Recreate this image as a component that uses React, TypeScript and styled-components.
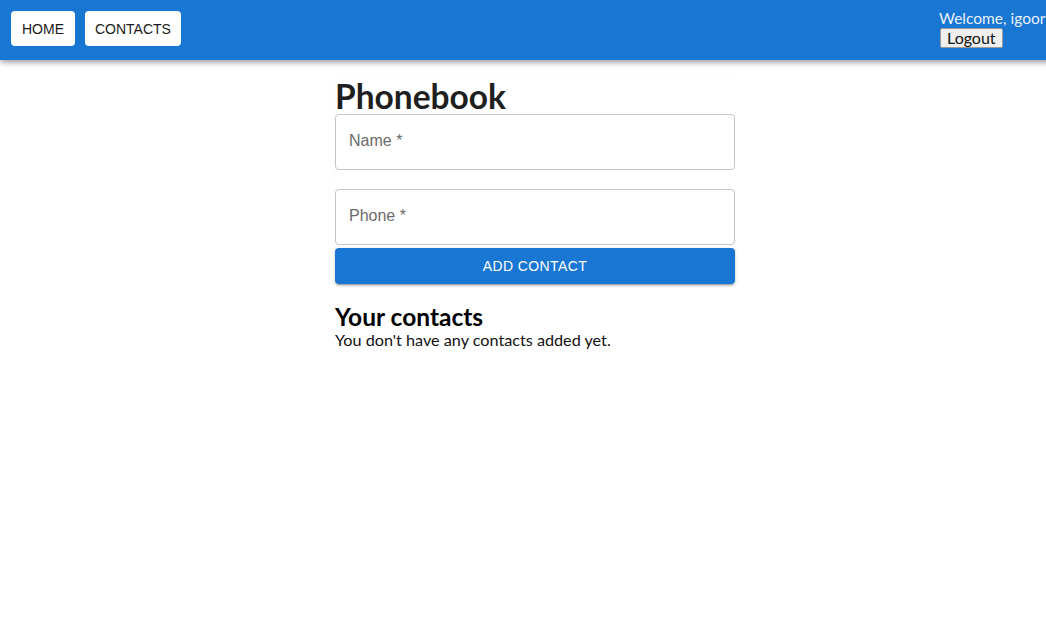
import React from "react";
import styled, { createGlobalStyle } from "styled-components";

const Global = createGlobalStyle`
  html, body { margin: 0; padding: 0; background: #fff; }
  body { font-family: "Lato", "Open Sans", sans-serif; color: #000; overflow: hidden; }
  * { box-sizing: border-box; }
`;

const Page = styled.div`
  width: 1070px;
`;

const Header = styled.header`
  height: 60px;
  background: #1976d2;
  display: flex;
  align-items: flex-start;
  box-shadow: 0 2px 4px -1px rgba(0,0,0,0.2), 0 4px 5px 0 rgba(0,0,0,0.14), 0 1px 10px 0 rgba(0,0,0,0.12);
`;

const Nav = styled.nav`
  display: flex;
  gap: 10px;
  padding: 11px 0 0 11px;
`;

const NavButton = styled.a<{ $px?: number }>`
  display: flex;
  align-items: center;
  height: 35px;
  padding: 0 ${(p) => p.$px ?? 11}px;
  background: #fff;
  border-radius: 4px;
  font-family: "Liberation Sans", Arial, sans-serif;
  font-size: 14px;
  color: #1a1a1a;
  text-decoration: none;
`;

const UserMenu = styled.div`
  margin-left: auto;
  width: 131px;
  padding-top: 8px;
  white-space: nowrap;
  display: flex;
  flex-direction: column;
  align-items: flex-start;
`;

const Welcome = styled.span`
  font-size: 15.5px;
  line-height: 20px;
  color: #e8f1fb;
`;

const LogoutButton = styled.button`
  margin-left: 1px;
  height: 20px;
  padding: 0 6px;
  font-family: "Lato", "Open Sans", sans-serif;
  font-size: 16px;
  line-height: 16px;
  color: #111;
  background: #efefef;
  border: 1px solid #9a9a9a;
  border-radius: 2px;
`;

const Main = styled.main`
  width: 400px;
  margin: 0 auto;
  padding-top: 18px;
`;

const Form = styled.form`
  display: flex;
  flex-direction: column;
  box-shadow: 0 0 3px rgba(0,0,0,0.04);
`;

const Title = styled.h1`
  margin: 0;
  font-weight: 700;
  font-size: 33.5px;
  line-height: 36px;
  color: #1f1f1f;
`;

const Field = styled.div<{ $mb: number }>`
  height: 56px;
  border: 1px solid #c4c4c4;
  border-radius: 4px;
  display: flex;
  align-items: center;
  padding: 0 13px 2px;
  margin-bottom: ${(p) => p.$mb}px;
  font-family: "Liberation Sans", Arial, sans-serif;
  font-size: 16px;
  color: #6b6b6b;
`;

const SubmitButton = styled.button`
  height: 36px;
  border: none;
  border-radius: 4px;
  background: #1976d2;
  color: #fff;
  font-family: "Liberation Sans", Arial, sans-serif;
  font-size: 14px;
  letter-spacing: 0.4px;
  text-transform: uppercase;
  box-shadow: 0 3px 1px -2px rgba(0,0,0,0.2), 0 2px 2px 0 rgba(0,0,0,0.14), 0 1px 5px 0 rgba(0,0,0,0.12);
`;

const SectionTitle = styled.h2`
  margin: 19px 0 0;
  font-weight: 700;
  font-size: 24.5px;
  line-height: 28px;
  color: #000;
`;

const Empty = styled.p`
  margin: 0;
  font-size: 16.2px;
  line-height: 18px;
  color: #111;
`;

export default function App() {
  return (
    <Page>
      <Global />
      <Header>
        <Nav>
          <NavButton href="#">HOME</NavButton>
          <NavButton href="#" $px={10}>CONTACTS</NavButton>
        </Nav>
        <UserMenu>
          <Welcome>Welcome, igoor</Welcome>
          <LogoutButton>Logout</LogoutButton>
        </UserMenu>
      </Header>
      <Main>
        <Form onSubmit={(e) => e.preventDefault()}>
          <Title>Phonebook</Title>
          <Field $mb={19}>Name *</Field>
          <Field $mb={3}>Phone *</Field>
          <SubmitButton type="submit">Add contact</SubmitButton>
        </Form>
        <SectionTitle>Your contacts</SectionTitle>
        <Empty>You don't have any contacts added yet.</Empty>
      </Main>
    </Page>
  );
}
